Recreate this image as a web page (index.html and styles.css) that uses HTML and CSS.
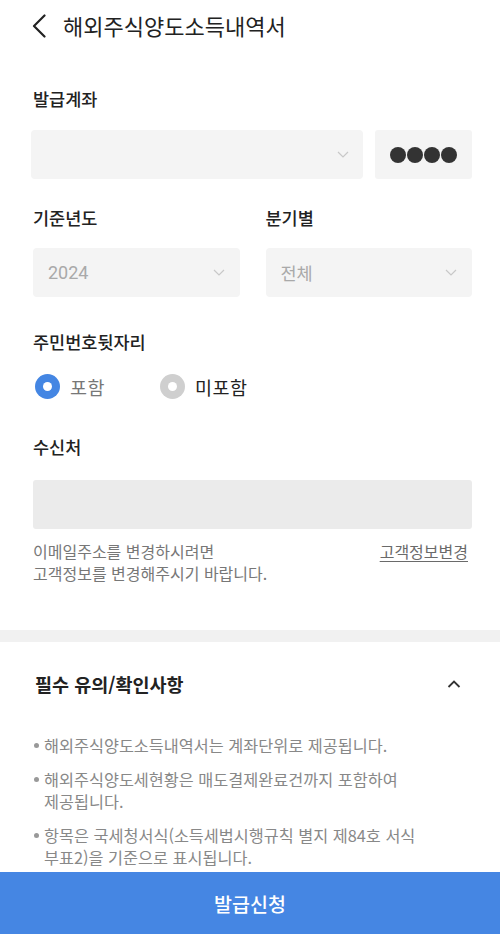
FILE: index.html
```html
<!DOCTYPE html>
<html lang="ko">
<head>
<meta charset="utf-8">
<title>해외주식양도소득내역서</title>
<link rel="stylesheet" href="styles.css">
</head>
<body>
<header class="header">
  <svg class="back" width="14" height="24" viewBox="0 0 14 24"><path d="M12.5 1.5 L2 12 L12.5 22.5" fill="none" stroke="#222" stroke-width="2.2" stroke-linecap="round" stroke-linejoin="round"/></svg>
  <h1 class="title">해외주식양도소득내역서</h1>
</header>

<main class="form">
  <div class="label label-first">발급계좌</div>
  <div class="account-row">
    <div class="select select-account">
      <span class="select-value"></span>
      <svg class="chev" width="12" height="7" viewBox="0 0 12 7"><path d="M1 1 L6 6 L11 1" fill="none" stroke="#c8c8c8" stroke-width="1.2"/></svg>
    </div>
    <div class="masked"><span class="dot"></span><span class="dot"></span><span class="dot"></span><span class="dot"></span></div>
  </div>

  <div class="two-col">
    <div class="col">
      <div class="label">기준년도</div>
      <div class="select">
        <span class="select-value num">2024</span>
        <svg class="chev" width="12" height="7" viewBox="0 0 12 7"><path d="M1 1 L6 6 L11 1" fill="none" stroke="#c8c8c8" stroke-width="1.2"/></svg>
      </div>
    </div>
    <div class="col">
      <div class="label">분기별</div>
      <div class="select">
        <span class="select-value">전체</span>
        <svg class="chev" width="12" height="7" viewBox="0 0 12 7"><path d="M1 1 L6 6 L11 1" fill="none" stroke="#c8c8c8" stroke-width="1.2"/></svg>
      </div>
    </div>
  </div>

  <div class="label label-rrn">주민번호뒷자리</div>
  <div class="radios">
    <label class="radio"><span class="radio-mark on"></span><span class="radio-text muted">포함</span></label>
    <label class="radio"><span class="radio-mark off"></span><span class="radio-text">미포함</span></label>
  </div>

  <div class="label label-recv">수신처</div>
  <div class="email-box"></div>
  <div class="helper">
    <p class="helper-text">이메일주소를 변경하시려면<br>고객정보를 변경해주시기 바랍니다.</p>
    <a class="helper-link">고객정보변경</a>
  </div>
</main>

<div class="divider"></div>

<section class="notice">
  <div class="notice-head">
    <h2 class="notice-title">필수 유의/확인사항</h2>
    <svg class="caret" width="14" height="8" viewBox="0 0 14 8"><path d="M1.5 7 L7 1.5 L12.5 7" fill="none" stroke="#333" stroke-width="1.8"/></svg>
  </div>
  <ul class="notice-list">
    <li>해외주식양도소득내역서는 계좌단위로 제공됩니다.</li>
    <li>해외주식양도세현황은 매도결제완료건까지 포함하여<br>제공됩니다.</li>
    <li>항목은 국세청서식(소득세법시행규칙 별지 제84호 서식<br>부표2)을 기준으로 표시됩니다.</li>
  </ul>
</section>

<button class="submit">발급신청</button>
</body>
</html>
```

FILE: styles.css
```css
* { box-sizing: border-box; }
html, body { margin: 0; padding: 0; background: #fff; }
body {
  font-family: "Noto Sans CJK KR", "Noto Sans", sans-serif;
  color: #222;
  width: 500px;
  height: 934px;
  overflow: hidden;
}
.header {
  height: 50px;
  display: flex;
  align-items: center;
  padding-left: 32px;
}
.back { display: block; margin-top: 1px; }
.title {
  margin: 0 0 0 17px;
  font-size: 22px;
  font-weight: 400;
  line-height: 28px;
  color: #222;
}
.form { padding: 0 28px 0 32px; }
.label {
  font-size: 17.5px;
  font-weight: 500;
  line-height: 22px;
  color: #222;
  padding-left: 1px;
}
.label-first { margin-top: 38px; }
.account-row {
  display: flex;
  gap: 12px;
  margin-top: 20px;
  margin-left: -1px;
}
.select {
  height: 49px;
  background: #f4f4f4;
  border-radius: 4px;
  display: flex;
  align-items: center;
  justify-content: space-between;
  padding: 0 15px 0 15px;
}
.select-account { flex: 1; padding-right: 14px; }
.select-value { font-size: 17.5px; color: #a9a9a9; line-height: 22px; }
.select-value.num { font-family: Roboto, "Noto Sans CJK KR", sans-serif; font-size: 18px; }
.chev { display: block; }
.masked {
  width: 97px;
  height: 49px;
  background: #f4f4f4;
  border-radius: 3px;
  display: flex;
  align-items: center;
  justify-content: center;
  gap: 1px;
}
.dot {
  width: 16px;
  height: 16px;
  border-radius: 50%;
  background: #333;
}
.two-col {
  display: grid;
  grid-template-columns: 1fr 1fr;
  column-gap: 25px;
  margin-top: 28px;
}
.col .select { margin-top: 19px; margin-left: 1px; }
.label-rrn { margin-top: 34px; }
.radios {
  display: flex;
  align-items: center;
  margin-top: 21px;
  margin-left: 3px;
}
.radio { display: flex; align-items: center; margin-right: 55px; }
.radio-mark {
  width: 25px;
  height: 25px;
  border-radius: 50%;
  position: relative;
  display: block;
}
.radio-mark::after {
  content: "";
  position: absolute;
  left: 8px;
  top: 8px;
  width: 9px;
  height: 9px;
  border-radius: 50%;
  background: #fff;
}
.radio-mark.on { background: #4486e3; }
.radio-mark.off { background: #cfcfcf; }
.radio-text {
  margin-left: 10px;
  font-size: 18.5px;
  line-height: 24px;
  letter-spacing: 0.5px;
  color: #222;
}
.radio-text.muted { color: #777; }
.label-recv { margin-top: 37px; }
.email-box {
  margin-top: 22px;
  height: 49px;
  background: #ebebeb;
  border-radius: 3px;
  margin-left: 1px;
}
.helper {
  display: flex;
  justify-content: space-between;
  align-items: flex-start;
  margin-top: 11px;
  padding-left: 1px;
}
.helper-text {
  margin: 0;
  font-size: 16px;
  line-height: 22px;
  color: #777;
}
.helper-link {
  font-size: 16px;
  line-height: 22px;
  color: #6a6a6a;
  text-decoration: underline;
  text-underline-offset: 3px;
  margin-right: 4px;
}
.divider {
  height: 12px;
  background: #f1f1f1;
  margin-top: 46px;
}
.notice { padding: 0 30px 0 33px; }
.notice-head {
  display: flex;
  justify-content: space-between;
  align-items: center;
  margin-top: 30px;
}
.notice-title {
  margin: 0;
  font-size: 18.5px;
  font-weight: 700;
  line-height: 24px;
  color: #222;
  padding-left: 2px;
}
.caret { display: block; margin-right: 9px; }
.notice-list {
  list-style: none;
  margin: 38px 0 0 0;
  padding: 0;
}
.notice-list li {
  position: relative;
  padding-left: 11px;
  font-size: 16.3px;
  line-height: 22px;
  color: #888;
  margin-bottom: 12px;
}
.notice-list li::before {
  content: "";
  position: absolute;
  left: 1px;
  top: 9px;
  width: 5px;
  height: 5px;
  border-radius: 50%;
  background: #999;
}
.submit {
  position: fixed;
  left: 0;
  bottom: 0;
  width: 500px;
  height: 62px;
  border: 0;
  margin: 0;
  background: #4586e3;
  color: #fff;
  font-family: "Noto Sans CJK KR", "Noto Sans", sans-serif;
  font-size: 19.5px;
  font-weight: 500;
  padding: 0;
}
```
